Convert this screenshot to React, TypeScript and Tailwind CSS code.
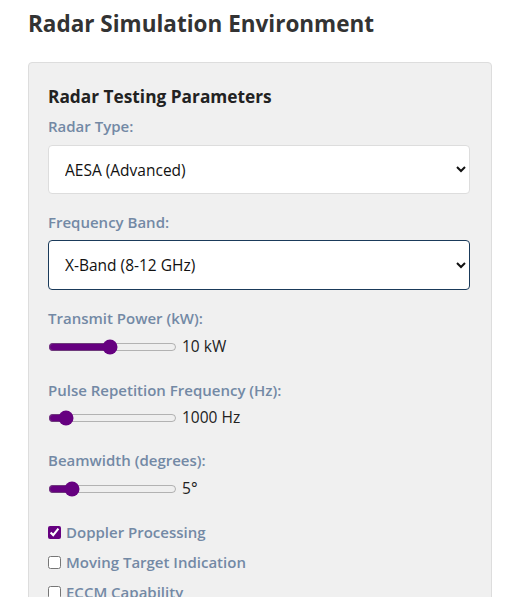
import { useState } from 'react';

const Slider = ({ min, max, value, unit }: { min: number; max: number; value: number; unit: string }) => {
  const [v, setV] = useState(value);
  return (
    <div className="flex items-center h-[20px] mb-[23px]">
      <input
        type="range"
        min={min}
        max={max}
        value={v}
        onChange={(e) => setV(Number(e.target.value))}
        className="w-[129px] m-0 accent-[#660080]"
      />
      <span className="ml-[5px] text-[15.5px] text-[#222]">{v}{unit}</span>
    </div>
  );
};

const Check = ({ label, checked }: { label: string; checked?: boolean }) => (
  <label className="flex items-center h-[20px] mb-[10px] text-[15px] text-[#7389a5] font-semibold">
    <input type="checkbox" defaultChecked={checked} className="w-[13px] h-[13px] m-0 mr-[5px] accent-[#660080]" />
    {label}
  </label>
);

const App = () => {
  return (
    <div className="px-[28px] pt-[9px] bg-white min-h-screen text-[#333]" style={{ fontFamily: '"Open Sans", sans-serif' }}>
      <h1 className="text-[22.5px] leading-[30px] font-bold text-[#333]">Radar Simulation Environment</h1>
      <div className="mt-[23px] w-[464px] bg-[#f0f0f0] border border-[#dddddd] rounded-[4px] pt-[20px] pb-[20px] pl-[19px] pr-[21px]">
        <h3 className="text-[17.3px] leading-[24px] font-bold text-[#222] mt-[2px]">Radar Testing Parameters</h3>
        <label className="block text-[15px] leading-[20px] font-semibold text-[#7389a5] mt-[7px]">Radar Type:</label>
        <select defaultValue="aesa" className="block w-full h-[49px] mt-[9px] px-[12px] bg-white border border-[#dddddd] rounded-[4px] text-[15.5px] text-[#111]">
          <option value="pulse">Pulse Doppler</option>
          <option value="aesa">AESA (Advanced)</option>
          <option value="fmcw">FMCW</option>
        </select>
        <label className="block text-[15px] leading-[20px] font-semibold text-[#7389a5] mt-[18px]">Frequency Band:</label>
        <select defaultValue="x" className="block w-full h-[50px] mt-[8px] px-[12px] bg-white border border-[#1a3a5a] rounded-[4px] text-[15.5px] text-[#111]">
          <option value="s">S-Band (2-4 GHz)</option>
          <option value="c">C-Band (4-8 GHz)</option>
          <option value="x">X-Band (8-12 GHz)</option>
        </select>
        <label className="block text-[15px] leading-[20px] font-semibold text-[#7389a5] mt-[18px]">Transmit Power (kW):</label>
        <div className="mt-[9px]">
          <Slider min={1} max={20} value={10} unit=" kW" />
        </div>
        <label className="block text-[15px] leading-[20px] font-semibold text-[#7389a5]">Pulse Repetition Frequency (Hz):</label>
        <div className="mt-[8px]">
          <Slider min={100} max={10000} value={1000} unit=" Hz" />
        </div>
        <label className="block text-[15px] leading-[20px] font-semibold text-[#7389a5] -mt-[1px]">Beamwidth (degrees):</label>
        <div className="mt-[9px]">
          <Slider min={1} max={30} value={5} unit="°" />
        </div>
        <Check label="Doppler Processing" checked />
        <Check label="Moving Target Indication" />
        <Check label="ECCM Capability" />
      </div>
    </div>
  );
};

export default App;
